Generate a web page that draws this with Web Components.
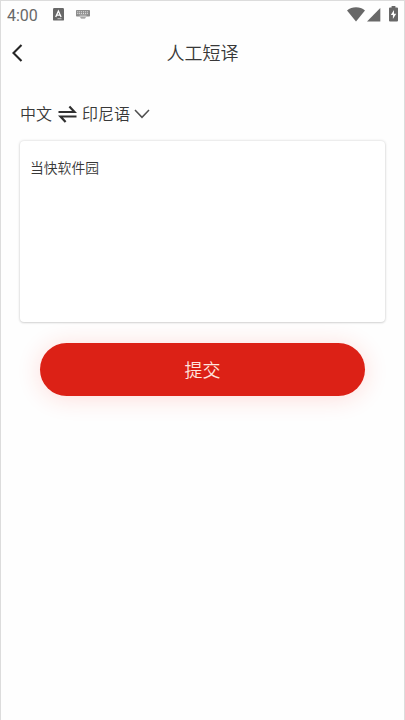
<!DOCTYPE html>
<html lang="zh-CN">
<head>
<meta charset="utf-8">
<title>人工短译</title>
<style>
html,body{margin:0;height:100%;overflow:hidden;background:#fefefe}
body{font-family:"Noto Sans CJK SC",sans-serif;font-weight:350;color:#383838}
</style>
</head>
<body>
<app-screen>
  <status-bar time="4:00"></status-bar>
  <nav-header>人工短译</nav-header>
  <language-switch><span slot="from">中文</span><span slot="to">印尼语</span></language-switch>
  <text-card>当快软件园</text-card>
  <submit-button>提交</submit-button>
</app-screen>
<script>
function define(name, html) {
  const template = document.createElement('template');
  template.innerHTML = html;
  customElements.define(name, class extends HTMLElement {
    constructor() {
      super();
      this.attachShadow({mode: 'open'}).append(template.content.cloneNode(true));
    }
    connectedCallback() {
      const time = this.shadowRoot.querySelector('.time');
      if (time) time.textContent = this.getAttribute('time');
    }
  });
}

define('app-screen', `
<style>
:host{display:flex;flex-direction:column;box-sizing:border-box;width:405px;height:720px;border:1px solid #dcdcdc;border-bottom:0;background:#fefefe}
</style><slot></slot>`);

define('status-bar', `
<style>
:host{display:flex;align-items:center;box-sizing:border-box;height:28px;padding:0 6px 2px 6px;color:#686868;font:16px/28px Roboto,sans-serif}
.time{width:31px;padding-top:3px;white-space:nowrap}
svg{display:block;fill:#686868}
.app{margin-left:15px}
.keys{margin-left:12px}
.wifi{margin-left:auto}
.signal{margin-left:2px}
.battery{margin-left:8px}
</style>
<span class="time"></span>
<svg class="app" width="11" height="13" viewBox="0 0 11 13"><rect width="11" height="12.6" rx="1.2"/><path d="M2.7 9 5.4 3l2.7 6M3.7 7.2h3.4" fill="none" stroke="#fff" stroke-width="1.3"/><path d="M4.5 10.7h4" stroke="#ddd" stroke-width=".8"/></svg>
<svg class="keys" width="14" height="9" viewBox="0 0 14 9"><rect width="14" height="6.5" rx=".8" fill="#8c8c8c"/><path d="M1.3 1.8h11.4M1.3 3.6h11.4" stroke="#f5f5f5" stroke-width=".9" stroke-dasharray="1 .9"/><path d="M3.5 5.2h7" stroke="#ddd" stroke-width=".6"/><path d="M4 7.2h6L9 8.6H5z" fill="#888"/></svg>
<svg class="wifi" width="18" height="15" viewBox="0 0 18 15"><path d="M0 3.5C5-.8 13-.8 18 3.5L9 14.5z"/></svg>
<svg class="signal" width="14" height="15" viewBox="0 0 14 15"><path d="M0 14.5 13.3 1v13.5z"/></svg>
<svg class="battery" width="9" height="16" viewBox="0 0 9 16"><path d="M2.6 0h3.8v1.5H8q1 0 1 1v12q0 1-1 1H1q-1 0-1-1v-12q0-1 1-1h1.6z"/><path d="M5 4 1.8 9h2.1v4L7.2 7.7H5z" fill="#fff"/></svg>`);

define('nav-header', `
<style>
:host{display:grid;grid-template-columns:32px 1fr 32px;align-items:center;height:46px}
h1{margin:0;font-size:18px;line-height:26px;font-weight:350;text-align:center}
svg{margin:1px 0 0 10px;display:block}
</style>
<svg width="12" height="18" viewBox="0 0 12 18"><path d="M10.5 1 2.5 9 10.5 17" fill="none" stroke="#252525" stroke-width="2.1"/></svg>
<h1><slot></slot></h1>`);

define('language-switch', `
<style>
:host{display:flex;align-items:center;height:24px;margin-top:26px;padding-left:19px;font-size:16px;line-height:24px}
svg{display:block;fill:none}
.swap{margin:1px 5px 0 6px}
.down{margin:1px 0 0 4px}
</style>
<slot name="from"></slot>
<svg class="swap" width="19" height="18" viewBox="0 0 19 18" stroke="#303030" stroke-width="2.2"><path d="M.5 7h16L11.4 1.5M18.5 11.5H2.5L7.6 17"/></svg>
<slot name="to"></slot>
<svg class="down" width="16" height="10" viewBox="0 0 16 10"><path d="M1 1 8 8.3 15 1" stroke="#505050" stroke-width="1.5"/></svg>`);

define('text-card', `
<style>
:host{display:block;box-sizing:border-box;height:181px;margin:16px 19px 0;padding:16px 10px;border-radius:4px;background:#fff;box-shadow:0 0 3px rgba(0,0,0,.18),0 1px 2px rgba(0,0,0,.1);font-size:13.8px;line-height:20px}
</style><slot></slot>`);

define('submit-button', `
<style>
:host{display:block;margin:21px 39px 0}
button{display:block;width:100%;height:53px;padding:0;border:0;border-radius:27px;background:#dc2116;color:#ffe5df;font:350 18px/53px "Noto Sans CJK SC",sans-serif;box-shadow:0 2px 24px rgba(255,45,25,.16)}
</style><button type="button"><slot></slot></button>`);
</script>
</body>
</html>
